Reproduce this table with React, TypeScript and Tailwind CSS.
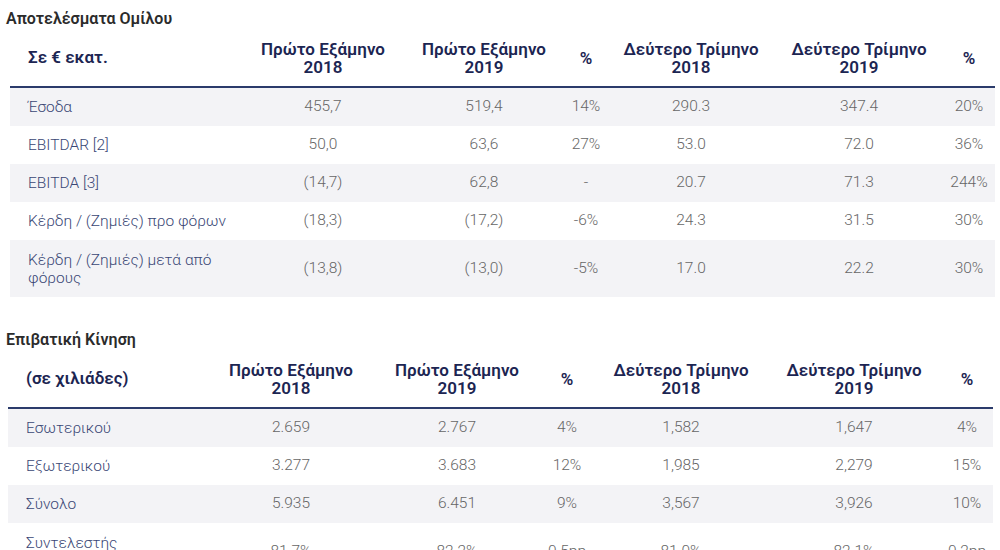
import React from "react";

type Row = { label: string; v: string[]; tall?: boolean };

const t1: Row[] = [
  { label: "Έσοδα", v: ["455,7", "519,4", "14%", "290.3", "347.4", "20%"] },
  { label: "EBITDAR [2]", v: ["50,0", "63,6", "27%", "53.0", "72.0", "36%"] },
  { label: "EBITDA [3]", v: ["(14,7)", "62,8", "-", "20.7", "71.3", "244%"] },
  { label: "Κέρδη / (Ζημιές) προ φόρων", v: ["(18,3)", "(17,2)", "-6%", "24.3", "31.5", "30%"] },
  { label: "Κέρδη / (Ζημιές) μετά από φόρους", v: ["(13,8)", "(13,0)", "-5%", "17.0", "22.2", "30%"], tall: true },
];

const t2: Row[] = [
  { label: "Εσωτερικού", v: ["2.659", "2.767", "4%", "1,582", "1,647", "4%"] },
  { label: "Εξωτερικού", v: ["3.277", "3.683", "12%", "1,985", "2,279", "15%"] },
  { label: "Σύνολο", v: ["5.935", "6.451", "9%", "3,567", "3,926", "10%"] },
  { label: "Συντελεστής πληρότητας", v: ["81.7%", "82.2%", "0.5pp", "81.0%", "82.1%", "0.2pp"], tall: true },
];

const heads = [
  ["Πρώτο Εξάμηνο", "2018"],
  ["Πρώτο Εξάμηνο", "2019"],
  ["%"],
  ["Δεύτερο Τρίμηνο", "2018"],
  ["Δεύτερο Τρίμηνο", "2019"],
  ["%"],
];

function Table({
  cols,
  first,
  rows,
  labelWidth,
}: {
  cols: string;
  first: string;
  rows: Row[];
  labelWidth: string;
}) {
  return (
    <div>
      <div className={`grid ${cols} items-center h-[62px] pt-[6px] box-border`}>
        <div className="pl-[18px] text-[17px] font-semibold text-[#1c2552]">{first}</div>
        {heads.map((h, i) => (
          <div
            key={i}
            className="text-center whitespace-nowrap text-[17px] leading-[18px] font-semibold text-[#1c2552]"
          >
            {h.map((l, j) => (
              <div key={j}>{l}</div>
            ))}
          </div>
        ))}
      </div>
      <div className="border-t-2 border-[#2b3b6b]">
        {rows.map((r, i) => (
          <div
            key={i}
            className={`grid ${cols} items-center ${
              i % 2 === 0 ? "bg-[#f3f3f6]" : "bg-white"
            } ${r.tall ? "h-[57px]" : "h-[38px]"}`}
          >
            <div className={`pl-[18px] ${labelWidth} text-[15.5px] leading-[18px] font-light text-[#3a4775]`}>
              {r.label}
            </div>
            {r.v.map((v, j) => (
              <div key={j} className="text-center text-[15.5px] font-light text-[#666666] whitespace-nowrap">
                {v}
              </div>
            ))}
          </div>
        ))}
      </div>
    </div>
  );
}

export default function App() {
  return (
    <div className="w-[1000px] h-[550px] overflow-hidden bg-white" style={{ fontFamily: "Roboto, 'Noto Sans', sans-serif" }}>
      <div className="pl-[6px] pt-[9px] text-[16px] leading-[20px] font-semibold text-[#2b2b2b]">
        Αποτελέσματα Ομίλου
      </div>
      <div className="ml-[10px] w-[985px] -mt-[5px]">
        <Table
          cols="grid-cols-[233px_160px_162px_42px_168px_168px_52px]"
          first="Σε € εκατ."
          rows={t1}
          labelWidth="w-[220px]"
        />
      </div>
      <div className="pl-[6px] pt-[33px] text-[16px] leading-[20px] font-semibold text-[#2b2b2b]">
        Επιβατική Κίνηση
      </div>
      <div className="ml-[8px] w-[985px] -mt-[5px]">
        <Table
          cols="grid-cols-[199px_168px_164px_56px_172px_174px_52px]"
          first="(σε χιλιάδες)"
          rows={t2}
          labelWidth="w-[150px]"
        />
      </div>
    </div>
  );
}
